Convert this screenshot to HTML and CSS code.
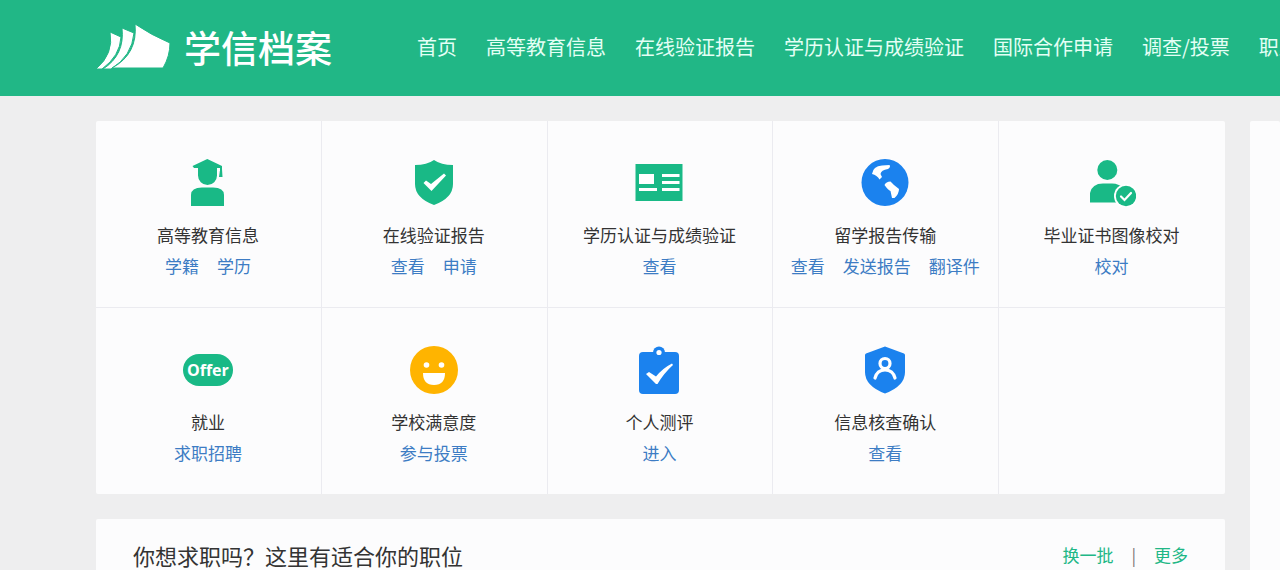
FILE: index.html
```
<!DOCTYPE html>
<html lang="zh-CN">
<head>
    <meta charset="UTF-8">
    <meta name="viewport" content="width=device-width, initial-scale=1.0">
    <title>学信档案</title>
    <link rel="stylesheet" href="styles.css">
</head>

<body>
    <header class="header">
        <a class="logo" href="#">
            <svg class="logo-mark" viewBox="0 0 75 46" aria-hidden="true">
                <path d="M14 8L25 13Q24 32 6 45H0Q18 30 14 8Z"/>
                <path d="M26 4L38 9Q36 32 15 45H7Q29 31 26 4Z"/>
                <path d="M39 0Q55 11 74 19Q74 32 67 44H16Q42 30 39 0Z"/>
            </svg>
            <span>学信档案</span>
        </a>
        <nav class="nav">
            <a href="#">首页</a>
            <a href="#">高等教育信息</a>
            <a href="#">在线验证报告</a>
            <a href="#">学历认证与成绩验证</a>
            <a href="#">国际合作申请</a>
            <a href="#">调查/投票</a>
            <a href="#">职业测评</a>
        </nav>
    </header>

    <div class="page">
        <main class="main">
            <section class="services">
                <div class="item">
                    <svg class="icon green" viewBox="0 0 48 48" aria-hidden="true">
                        <path d="M23.300 0L8.500 7L10 9H14V16.500A9.500 9.500 0 0 0 33 16.500V9H36V11L35 18H38.500L38 10V7Z"/>
                        <path d="M7 47V36Q7 28.500 18 28.500H29Q40 28.500 40 36V47Z"/>
                        <path class="white" d="M33 9H36V12H34V17H33Z"/>
                    </svg>
                    <h3>高等教育信息</h3>
                    <p><a href="#">学籍</a><a href="#">学历</a></p>
                </div>
                <div class="item">
                    <svg class="icon green" viewBox="0 0 48 48" aria-hidden="true">
                        <path d="M24 1Q31 6 43 6V25Q43 39 24 46Q5 39 5 25V6Q17 6 24 1Z"/>
                        <path class="white" d="M13.500 24L16 21.500L21 25L34 14.500L36 16.500L21.500 32Z"/>
                    </svg>
                    <h3>在线验证报告</h3>
                    <p><a href="#">查看</a><a href="#">申请</a></p>
                </div>
                <div class="item">
                    <svg class="icon green" viewBox="0 0 48 48" aria-hidden="true">
                        <path d="M0.500 5H47.500V42H0.500Z"/>
                        <path class="white" d="M4 15H19V25H4ZM4 29H22V32H4ZM27 15H44.500V18H27ZM27 22H44.500V25H27ZM27 29H44.500V32H27Z"/>
                    </svg>
                    <h3>学历认证与成绩验证</h3>
                    <p><a href="#">查看</a></p>
                </div>
                <div class="item">
                    <svg class="icon blue" viewBox="0 0 48 48" aria-hidden="true">
                        <circle cx="24" cy="23.500" r="23.500"/>
                        <path class="white" d="M11 15Q12 7 21 6.500L28.500 6Q30 8 27 10Q20 11 19.500 15L21 18L18.500 20.500Q16 16 11 15ZM23.500 26Q25 22.500 29.500 22.500L33 26L38 30Q38 35 33.500 39H31L29.500 32Q27 31 23.500 26Z"/>
                    </svg>
                    <h3>留学报告传输</h3>
                    <p><a href="#">查看</a><a href="#">发送报告</a><a href="#">翻译件</a></p>
                </div>
                <div class="item">
                    <svg class="icon green" viewBox="0 0 48 48" aria-hidden="true">
                        <circle cx="19.300" cy="11" r="10"/>
                        <path d="M2 43.500V34Q4 24.500 15 24.500H24Q31 24.500 37 30V43.500Z"/>
                        <circle class="white" cx="38" cy="37" r="12"/>
                        <circle cx="38" cy="37" r="10.200"/>
                        <path class="line" stroke-width="2.200" d="M33 37.500L36.500 41L43 34"/>
                    </svg>
                    <h3>毕业证书图像校对</h3>
                    <p><a href="#">校对</a></p>
                </div>
                <div class="item">
                    <div class="icon offer"><span>Offer</span></div>
                    <h3>就业</h3>
                    <p><a href="#">求职招聘</a></p>
                </div>
                <div class="item">
                    <svg class="icon yellow" viewBox="0 0 48 48" aria-hidden="true">
                        <circle cx="24" cy="24" r="24"/>
                        <circle class="white" cx="16.500" cy="19" r="2.800"/>
                        <circle class="white" cx="31.500" cy="19" r="2.800"/>
                        <path class="white" d="M13 27H35Q35 39 24 39Q13 39 13 27Z"/>
                    </svg>
                    <h3>学校满意度</h3>
                    <p><a href="#">参与投票</a></p>
                </div>
                <div class="item">
                    <svg class="icon blue" viewBox="0 0 48 48" aria-hidden="true">
                        <rect x="4" y="6" width="40" height="42" rx="4"/>
                        <circle cx="24" cy="6.500" r="6"/>
                        <circle class="white" cx="24" cy="6.500" r="2.600"/>
                        <path class="white" d="M11 28L14 26L21 30.500Q28 22 37 17.500L38 19Q29 27 22.500 38H21Z"/>
                    </svg>
                    <h3>个人测评</h3>
                    <p><a href="#">进入</a></p>
                </div>
                <div class="item">
                    <svg class="icon blue" viewBox="0 0 48 48" aria-hidden="true">
                        <path d="M24 0.500L43 7.500Q44 8 44 9V26Q44 40 24 47.500Q4 40 4 26V9Q4 8 5 7.500Z"/>
                        <circle class="line" cx="24" cy="17.500" r="5" stroke-width="3.200"/>
                        <path class="line" stroke-width="3.200" d="M14 32Q16 24 24 24Q32 24 34 32"/>
                    </svg>
                    <h3>信息核查确认</h3>
                    <p><a href="#">查看</a></p>
                </div>
                <div class="item"></div>
            </section>

            <section class="jobs">
                <h2>你想求职吗？这里有适合你的职位</h2>
                <div class="jobs-links">
                    <a href="#">换一批</a>
                    <span>|</span>
                    <a href="#">更多</a>
                </div>
            </section>
        </main>
        <aside class="side"></aside>
    </div>
</body>
</html>
```

FILE: styles.css
```
* {
    box-sizing: border-box;
}

body {
    margin: 0;
    background: #eeeeef;
    color: #333;
    font-family: "Noto Sans CJK SC", sans-serif;
    font-size: 17px;
    overflow-x: hidden;
}

a {
    text-decoration: none;
}

h2, h3, p {
    margin: 0;
    font-weight: normal;
}

/* header */
.header {
    display: flex;
    align-items: center;
    height: 96px;
    padding: 0 0 3px 96px;
    background: #21b786;
    white-space: nowrap;
    overflow: hidden;
}

.logo {
    display: flex;
    align-items: center;
    gap: 13px;
    color: #fff;
    font-size: 37px;
    font-weight: 500;
    line-height: 48px;
}

.logo-mark {
    width: 75px;
    height: 46px;
    fill: #fff;
    stroke: #21b786;
    stroke-width: 1;
}

.nav {
    display: flex;
    gap: 29px;
    margin-left: 85px;
    font-size: 20px;
    line-height: 30px;
}

.nav a {
    color: #e4fff5;
}

/* content */
.page {
    display: grid;
    grid-template-columns: minmax(0, 1fr) 30px;
    gap: 25px;
    padding: 25px 0 0 96px;
}

.services {
    display: grid;
    grid-template-columns: repeat(5, 1fr);
    background: #fcfcfd;
    border-radius: 2px;
}

.item {
    display: flex;
    flex-direction: column;
    align-items: center;
    padding: 38px 1px 26px 0;
    border-right: 1px solid #ebebf0;
    border-bottom: 1px solid #ebebf0;
    line-height: 31px;
    white-space: nowrap;
}

.item:nth-child(5n) {
    border-right: none;
}

.item:nth-child(n+6) {
    border-bottom: none;
}

.item h3 {
    margin-top: 12px;
    font-size: 17px;
}

.item p {
    display: flex;
    gap: 18px;
}

.item a {
    color: #3d7cc4;
}

/* icons */
.icon {
    width: 48px;
    height: 48px;
}

.green {
    fill: #19b986;
}

.blue {
    fill: #1b82ee;
}

.yellow {
    fill: #ffb400;
}

.white {
    fill: #fff;
}

.line {
    fill: none;
    stroke: #fff;
    stroke-linecap: round;
}

.offer {
    display: flex;
    align-items: center;
    justify-content: center;
}

.offer span {
    flex: none;
    width: 50px;
    border-radius: 16px;
    background: #19b986;
    color: #fff;
    font-family: "Open Sans", sans-serif;
    font-size: 16px;
    font-weight: bold;
    line-height: 32px;
    text-align: center;
}

/* jobs */
.jobs {
    display: flex;
    justify-content: space-between;
    margin-top: 25px;
    padding: 18px 37px;
    background: #fcfcfd;
    border-radius: 2px;
    line-height: 36px;
}

.jobs h2 {
    font-size: 22px;
}

.jobs-links {
    display: flex;
    gap: 18px;
    color: #777;
}

.jobs-links a {
    color: #21b786;
}

.side {
    background: #fcfcfd;
    border-radius: 2px;
}
```
